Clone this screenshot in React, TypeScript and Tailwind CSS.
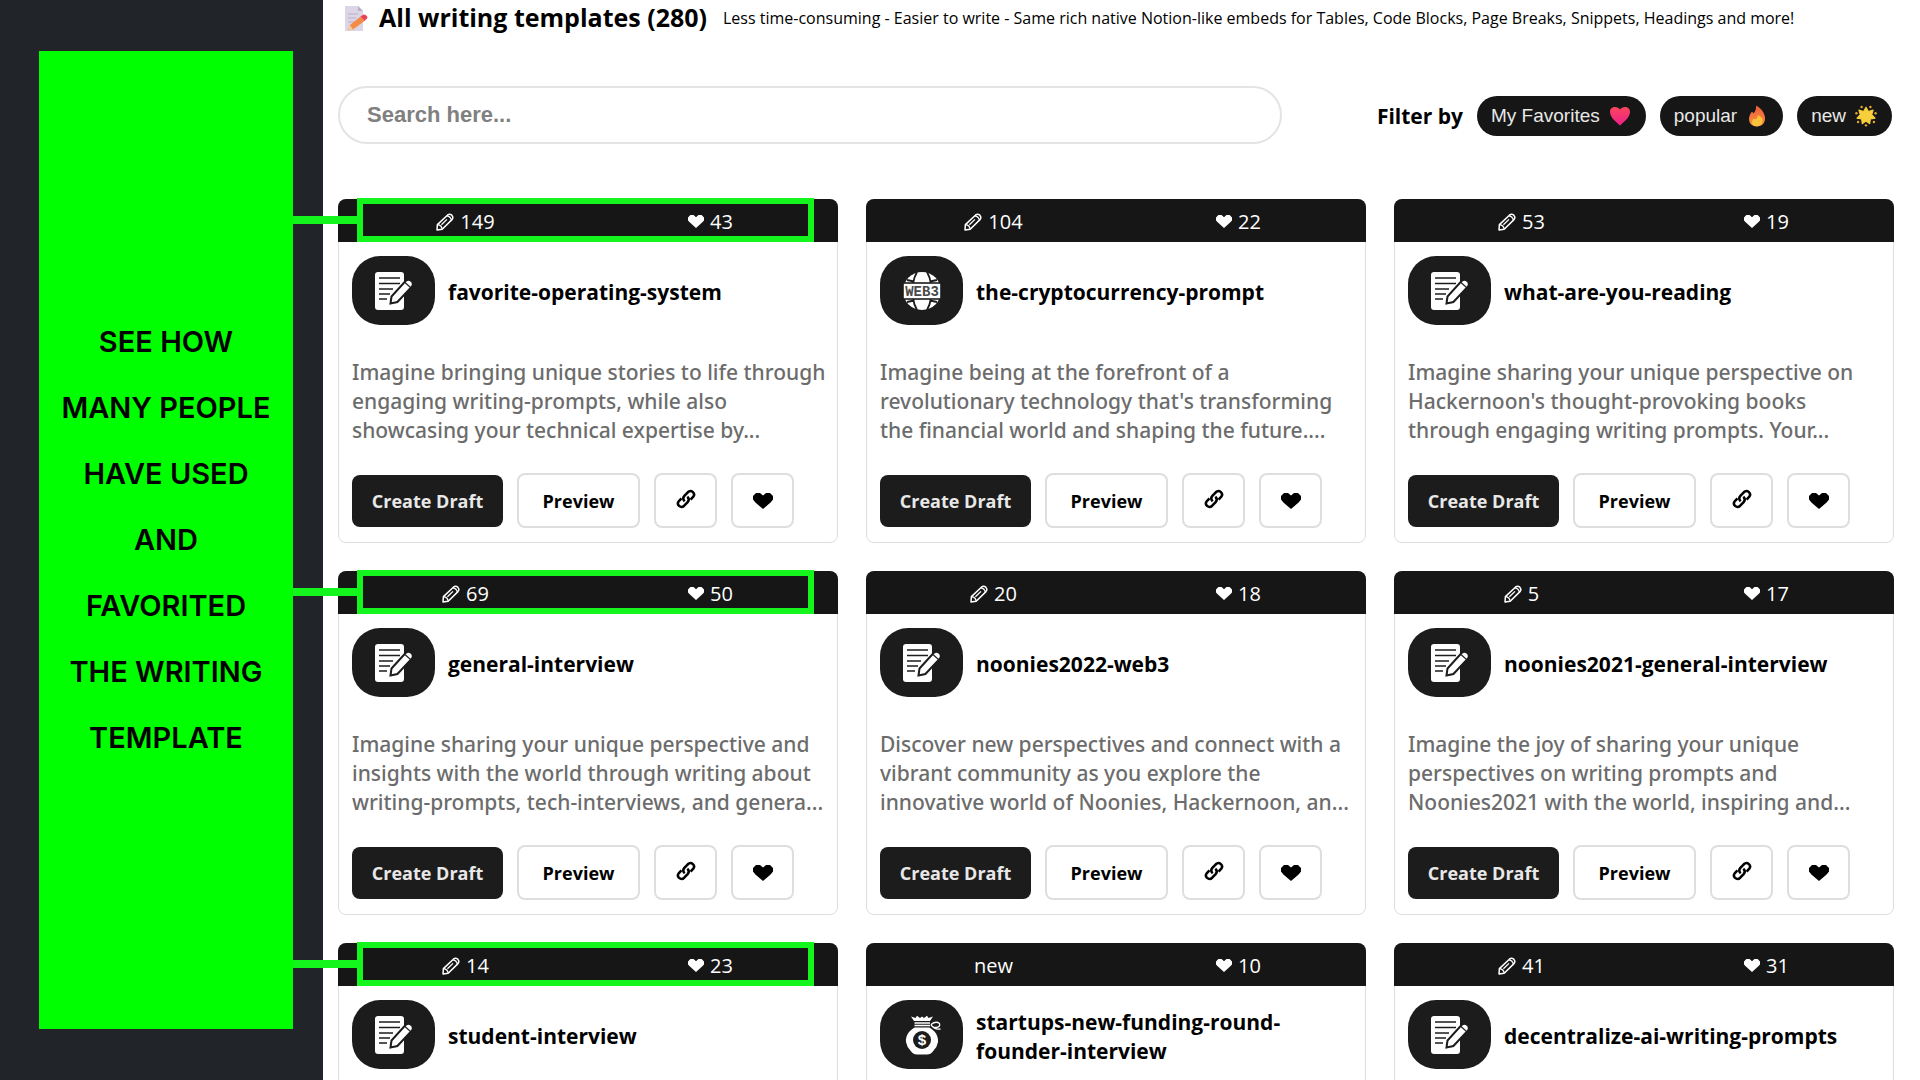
import { useState } from "react";

interface Template {
  name: string;
  uses: string;
  favorites: number;
  icon?: "doc" | "web3" | "money";
  description?: string;
  highlighted?: boolean;
}

const templates: Template[] = [
  {
    name: "favorite-operating-system",
    uses: "149",
    favorites: 43,
    highlighted: true,
    description:
      "Imagine bringing unique stories to life through engaging writing-prompts, while also showcasing your technical expertise by...",
  },
  {
    name: "the-cryptocurrency-prompt",
    uses: "104",
    favorites: 22,
    icon: "web3",
    description:
      "Imagine being at the forefront of a revolutionary technology that's transforming the financial world and shaping the future....",
  },
  {
    name: "what-are-you-reading",
    uses: "53",
    favorites: 19,
    description:
      "Imagine sharing your unique perspective on Hackernoon's thought-provoking books through engaging writing prompts. Your...",
  },
  {
    name: "general-interview",
    uses: "69",
    favorites: 50,
    highlighted: true,
    description:
      "Imagine sharing your unique perspective and insights with the world through writing about writing-prompts, tech-interviews, and genera...",
  },
  {
    name: "noonies2022-web3",
    uses: "20",
    favorites: 18,
    description:
      "Discover new perspectives and connect with a vibrant community as you explore the innovative world of Noonies, Hackernoon, an...",
  },
  {
    name: "noonies2021-general-interview",
    uses: "5",
    favorites: 17,
    description:
      "Imagine the joy of sharing your unique perspectives on writing prompts and Noonies2021 with the world, inspiring and...",
  },
  { name: "student-interview", uses: "14", favorites: 23, highlighted: true },
  { name: "startups-new-funding-round-founder-interview", uses: "new", favorites: 10, icon: "money" },
  { name: "decentralize-ai-writing-prompts", uses: "41", favorites: 31 },
];

const calloutLines = ["See how", "many people", "have used", "and", "favorited", "the writing", "template"];

function PencilIcon() {
  return (
    <svg className="h-[18px] w-[18px]" viewBox="0 0 18 18" fill="none" stroke="currentColor" strokeWidth="1.5" strokeLinejoin="round">
      <path d="M1 17 1.4 11.6 11.4 2.2Q13.6.4 15.8 2.2 17.8 4.4 16 6.6L6.2 16.2Z" />
      <path d="M1.6 11.6Q5.6 12 6.2 16.2M5.4 11.8 11 6.4M11 2.8Q14.6 3.4 15.4 7" strokeWidth="1.3" />
    </svg>
  );
}

function HeartIcon({ className }: { className: string }) {
  return (
    <svg className={className} viewBox="0 0 20 16" fill="currentColor">
      <path d="M3 0H7L10 2.6 13 0H17L20 3V6.6L17.6 9.4 10 16 2.4 9.4 0 6.6V3Z" />
    </svg>
  );
}

function LinkIcon() {
  return (
    <svg className="mb-1 h-5 w-5" viewBox="0 0 22 22" fill="none" stroke="currentColor" strokeWidth="2.8">
      <path d="M9.6 13.4C7.6 11.6 7.8 9.2 9.2 7.6L13 3.6C14.6 2 17 2 18.6 3.4 20.2 5 20.2 7.2 18.8 8.8L16 11.6" />
      <path d="M12.4 8.6C14.4 10.4 14.2 12.8 12.8 14.4L9 18.4C7.4 20 5 20 3.4 18.6 1.8 17 1.8 14.8 3.2 13.2L6 10.4" />
    </svg>
  );
}

function DocIcon() {
  return (
    <svg className="h-10 w-10" viewBox="0 0 40 40">
      <rect x="1" y="1" width="29" height="38" rx="3" fill="#fff" />
      <path d="M5 7H26M5 12.5H26M5 18H19M5 23H16M5 28H13" stroke="#1c1c1c" strokeWidth="1.6" />
      <path d="M16.5 32.5 17.5 25.5 32 9.6Q34.6 7.6 37.4 10 40 12.4 38 15.4L23.4 31Z" fill="#fff" stroke="#1c1c1c" strokeWidth="2" />
      <path d="M31 11.5 36.6 16.6" stroke="#1c1c1c" strokeWidth="1.2" />
    </svg>
  );
}

function GlobeIcon() {
  return (
    <svg className="h-10 w-10" viewBox="0 0 40 40">
      <circle cx="20" cy="20" r="19" fill="#fff" />
      <path
        d="M15 1Q12 6 11 13M25 1Q28 6 29 13M11 27Q12 34 15 39M29 27Q28 34 25 39M5 9 12 10.5M35 9 28 10.5M5 31 12 29.5M35 31 28 29.5"
        fill="none"
        stroke="#1c1c1c"
        strokeWidth="1.8"
      />
      <rect x="1" y="12" width="38" height="16" fill="#fff" stroke="#1c1c1c" strokeWidth="1.6" />
      <text x="20" y="24.5" textAnchor="middle" fontFamily="Liberation Mono, monospace" fontWeight="700" fontSize="14" fill="#4a4a4a">
        WEB3
      </text>
    </svg>
  );
}

function MoneyIcon() {
  return (
    <svg className="h-10 w-10" viewBox="0 0 40 40">
      <path d="M9 1.5 13.5 3 15 .8 18 3 20 1.5 22 3 25 .8 26.5 3 31 1.5 28 6H12Z" fill="#fff" />
      <path d="M12.5 8H28M12.5 10.5H28" stroke="#fff" strokeWidth="1.4" />
      <path d="M29 9.5Q34 5.5 37.5 8.5 38.6 12 34 12.5 30 12.5 29 9.5 32 15 38.5 14" fill="none" stroke="#fff" strokeWidth="1.3" />
      <path d="M12.5 12.5H27.5C33.5 16 36.5 21 36 27Q35 32 32 35 29 39.5 25 39.5H15Q11 39.5 8 35 5 32 4 27C3.5 21 6.5 16 12.5 12.5Z" fill="#fff" />
      <circle cx="20" cy="25" r="9" fill="#1c1c1c" />
      <text x="20" y="30" textAnchor="middle" fontFamily="Liberation Mono, monospace" fontWeight="700" fontSize="15" fill="#fff">
        $
      </text>
    </svg>
  );
}

function MemoEmoji() {
  return (
    <svg className="h-[27px] w-6" viewBox="0 0 24 27">
      <path d="M1 1H14L19 6V26H1Z" fill="#dcd5e6" />
      <path d="M14 1V6H19Z" fill="#b9aecb" />
      <path d="M4 9H14M4 13H12M4 17H10" stroke="#b9aecb" strokeWidth="1.2" />
      <path d="M4 25.5 6 20 16.5 11.5 20.5 16 9 24.5Z" fill="#f58b45" />
      <path d="M16.5 11.5 19.6 9.4Q23 9.6 23.5 13L20.5 16Z" fill="#e8435a" />
      <path d="M4 25.5 6 20 9 24.5Z" fill="#f6c9a0" />
    </svg>
  );
}

function LoveEmoji() {
  return (
    <svg className="h-5 w-6" viewBox="0 0 22 20">
      <defs>
        <linearGradient id="love" x1="0" y1="0" x2="0" y2="1">
          <stop offset="0" stopColor="#f8475c" />
          <stop offset="1" stopColor="#f01e8c" />
        </linearGradient>
      </defs>
      <path d="M11 3.6C13-.2 21.4-.4 21 6.2 20.6 12 14.6 16 11 19.6 7.4 16 1.4 12 1 6.2.6-.4 9-.2 11 3.6Z" fill="url(#love)" />
    </svg>
  );
}

function FireEmoji() {
  return (
    <svg className="h-[22px] w-6" viewBox="0 0 18 22">
      <defs>
        <linearGradient id="flame" x1="0" y1="0" x2="0" y2="1">
          <stop offset="0" stopColor="#ee5a3c" />
          <stop offset="1" stopColor="#f9943a" />
        </linearGradient>
      </defs>
      <path d="M8 .5C14 4 17 8.6 17 13.6 17 18.6 13.6 21.5 9 21.5 4.4 21.5 1 18.6 1 14 1 10.5 2.6 8.5 4 6.5L5.6 8.5C7.6 6 8.4 3.5 8 .5Z" fill="url(#flame)" />
      <path d="M10 10C13.5 12 15 14 14.4 16.8 13.8 19.8 11.6 21.2 9 21.2 6 21.2 3.8 19.4 3.8 17.4 3.8 15.5 5 14.5 6 13.5L7.2 14.5C8.8 13.5 9.8 12 10 10Z" fill="#fcc43c" />
    </svg>
  );
}

function StarEmoji() {
  return (
    <svg className="h-[22px] w-6" viewBox="0 0 20 20">
      <path
        d="M10 2 12.2 6 16.5 4.6 15.2 8.8 18.2 12 14 12.6 13.4 17 10 14.6 6.6 17 6 12.6 1.8 12 4.8 8.8 3.5 4.6 7.8 6Z"
        fill="#f7cf3c"
        stroke="#f7cf3c"
        strokeLinejoin="round"
      />
      <g fill="#e9a52c">
        <circle cx="6" cy="1.8" r="1.1" />
        <circle cx="14" cy="1.8" r="1.1" />
        <circle cx="1.3" cy="7.5" r="1.1" />
        <circle cx="18.7" cy="7.5" r="1.1" />
        <circle cx="2.8" cy="15.5" r="1.1" />
        <circle cx="17.2" cy="15.5" r="1.1" />
        <circle cx="10" cy="18.5" r="1.1" />
      </g>
    </svg>
  );
}

const icons = { doc: DocIcon, web3: GlobeIcon, money: MoneyIcon };

const filters = [
  { label: "My Favorites", Emoji: LoveEmoji },
  { label: "popular", Emoji: FireEmoji },
  { label: "new", Emoji: StarEmoji },
];

function TemplateCard({ template }: { template: Template }) {
  const { name, uses, favorites, icon, description, highlighted } = template;
  const Icon = icons[icon ?? "doc"];

  return (
    <article className="min-h-[344px] rounded-lg border border-[#dedede] bg-white">
      <div className="relative -mx-px -mt-px grid h-[43px] grid-cols-2 items-center rounded-t-lg bg-[#161616] px-[5px] pt-0.5 text-xl text-white">
        <span className="flex items-center justify-center gap-1.5">
          {uses !== "new" && <PencilIcon />}
          {uses}
        </span>
        <span className="flex items-center justify-center gap-1.5">
          <HeartIcon className="h-[13px] w-4" />
          {favorites}
        </span>
        {highlighted && (
          <>
            <span className="absolute -top-px right-6 bottom-0 left-[19px] border-6 border-[#14f51e]" />
            <span className="absolute top-[17px] -left-[45px] h-2 w-16 bg-[#14f51e]" />
          </>
        )}
      </div>

      <div className="py-3.5 pr-2 pb-3 pl-[13px]">
        <div className="flex h-[69px] items-center gap-[13px]">
          <span className="flex h-full w-[83px] shrink-0 items-center justify-center rounded-[28px] bg-[#1c1c1c]">
            <Icon />
          </span>
          <h2 className="pt-1 text-[21px] leading-[29px] font-bold">{name}</h2>
        </div>

        {description && (
          <>
            <p className="mt-[33px] line-clamp-3 font-['Noto_Sans',sans-serif] text-[21px] leading-[29px] font-medium text-[#6c6c6c]">
              {description}
            </p>
            <div className="mt-7 flex items-center gap-3.5 text-lg font-bold">
              <button className="h-[52px] w-[151px] rounded-lg bg-[#1c1c1c] text-[#e8e8e8]">Create Draft</button>
              <button className="h-[55px] w-[123px] rounded-lg border-2 border-[#dedede]">Preview</button>
              <button aria-label="Copy link" className="flex h-[55px] w-[63px] items-center justify-center rounded-lg border-2 border-[#dedede]">
                <LinkIcon />
              </button>
              <button aria-label="Favorite" className="flex h-[55px] w-[63px] items-center justify-center rounded-lg border-2 border-[#dedede]">
                <HeartIcon className="h-4 w-5" />
              </button>
            </div>
          </>
        )}
      </div>
    </article>
  );
}

export default function App() {
  const [query, setQuery] = useState("");

  return (
    <div className="flex h-screen overflow-hidden bg-white font-['Open_Sans',sans-serif] text-black">
      <aside className="flex w-[323px] shrink-0 flex-col bg-[#212529] pt-[51px] pr-[30px] pb-[51px] pl-[39px]">
        <div className="flex flex-1 flex-col items-center justify-center bg-[#00ff00] font-['Inter',sans-serif] text-[29px] leading-[66px] font-semibold uppercase">
          {calloutLines.map((line) => (
            <span key={line}>{line}</span>
          ))}
        </div>
      </aside>

      <main className="min-w-0 flex-1 pr-[26px] pl-[15px]">
        <header className="flex h-9 items-center pl-1.5 whitespace-nowrap">
          <MemoEmoji />
          <h1 className="ml-[11px] text-[25px] font-bold">All writing templates (280)</h1>
          <p className="ml-4 text-base">
            Less time-consuming - Easier to write - Same rich native Notion-like embeds for Tables, Code Blocks, Page
            Breaks, Snippets, Headings and more!
          </p>
        </header>

        <div className="mt-[50px] flex items-center justify-between gap-8">
          <input
            type="search"
            aria-label="Search templates"
            placeholder="Search here..."
            value={query}
            onChange={(e) => setQuery(e.target.value)}
            className="h-[58px] w-full max-w-[944px] min-w-0 rounded-full border-2 border-[#e4e4e4] px-[27px] font-['Liberation_Sans',sans-serif] text-[22px] font-bold outline-none placeholder:text-[#808080]"
          />
          <div className="flex shrink-0 items-center gap-3.5 pt-0.5 pr-0.5">
            <span className="pt-0.5 text-[21px] font-bold">Filter by</span>
            {filters.map(({ label, Emoji }) => (
              <button
                key={label}
                className="flex h-10 items-center gap-2 rounded-full bg-[#161616] px-3.5 font-['Liberation_Sans',sans-serif] text-[19px] text-[#e8e8e8]"
              >
                {label}
                <Emoji />
              </button>
            ))}
          </div>
        </div>

        <div className="mt-[55px] grid grid-cols-3 gap-7">
          {templates.map((template) => (
            <TemplateCard key={template.name} template={template} />
          ))}
        </div>
      </main>
    </div>
  );
}
